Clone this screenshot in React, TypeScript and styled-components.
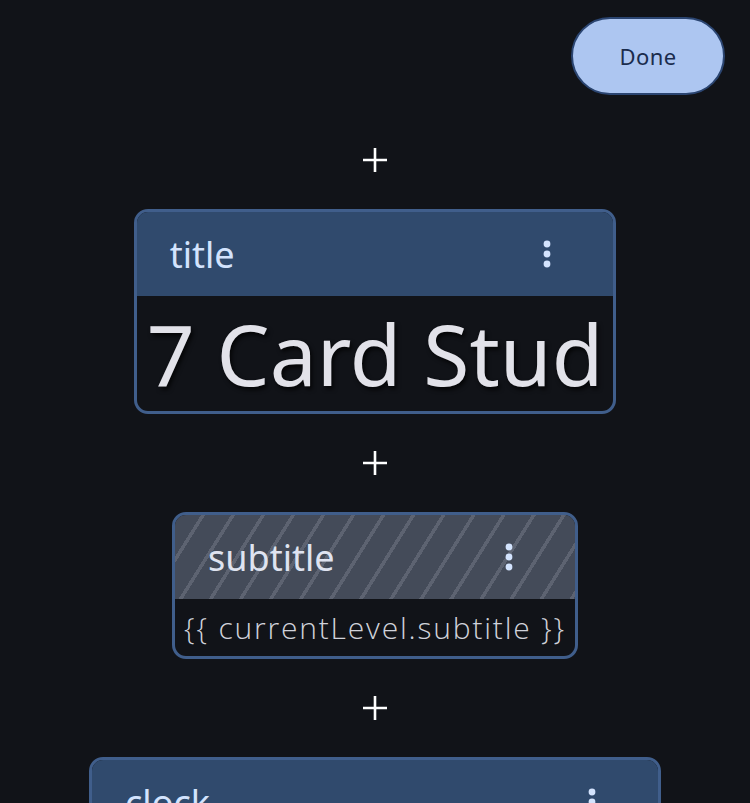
import styled, { createGlobalStyle, css } from 'styled-components';

const GlobalStyle = createGlobalStyle`
  html,
  body {
    margin: 0;
    background: #111318;
    font-family: 'Noto Sans', 'Open Sans', sans-serif;
  }
`;

const StyledPage = styled.main`
  display: flex;
  flex-direction: column;
  align-items: center;
  padding-top: 17px;
`;

const StyledTopBar = styled.div`
  display: flex;
  justify-content: flex-end;
  align-self: stretch;
  padding-right: 25px;
  margin-bottom: 16px;
`;

const StyledDoneButton = styled.button`
  width: 154px;
  height: 78px;
  border: 2px solid #2b4571;
  border-radius: 39px;
  background: #adc6f1;
  color: #1a2c4d;
  font-family: 'Noto Sans', sans-serif;
  font-size: 22px;
  letter-spacing: 0.4px;
  cursor: pointer;
`;

const StyledAddButton = styled.button`
  display: flex;
  align-items: center;
  justify-content: center;
  width: 48px;
  height: 48px;
  margin: 25px 0;
  padding: 0;
  border: 0;
  background: none;
  cursor: pointer;
`;

const StyledCard = styled.section`
  display: flex;
  flex-direction: column;
  overflow: hidden;
  border: 3px solid #405e8b;
  border-radius: 14px;
  background: #111318;
`;

const StyledHeader = styled.header<{ $striped?: boolean }>`
  display: flex;
  align-items: center;
  justify-content: space-between;
  height: 84px;
  padding: 0 54px 0 33px;
  background: #304a6d;
  color: #d3e3fd;

  ${({ $striped }) => $striped && css`
    background: repeating-linear-gradient(
      122deg,
      #444b59 0,
      #444b59 22px,
      #5d6371 22px,
      #5d6371 25.5px
    );
    color: #dfe3f0;
  `}
`;

const StyledName = styled.h2`
  margin: 0;
  font-size: 36px;
  font-weight: 400;
`;

const StyledMenuButton = styled.button`
  display: flex;
  align-items: center;
  justify-content: center;
  width: 24px;
  height: 48px;
  padding: 0;
  border: 0;
  background: none;
  color: inherit;
  cursor: pointer;
`;

const StyledTitleText = styled.div`
  padding: 0 10px;
  color: #e2e2e9;
  font-size: 84px;
  line-height: 115px;
  text-align: center;
  white-space: nowrap;
  text-shadow: 2px 3px 4px rgba(0, 0, 0, 0.75);
`;

const StyledTemplateText = styled.div`
  padding: 0 9px;
  color: #d0d2da;
  font-family: 'Open Sans', 'Noto Sans', sans-serif;
  font-size: 30px;
  font-weight: 300;
  letter-spacing: 1.8px;
  line-height: 57px;
  white-space: nowrap;
`;

const StyledClockText = styled.div`
  padding: 0 12px;
  color: #e2e2e9;
  font-size: 212px;
  line-height: 1.2;
  white-space: nowrap;
`;

const PlusIcon = () => (
  <svg width="26" height="26" viewBox="0 0 26 26">
    <path d="M13 1v24M1 13h24" stroke="#ffffff" strokeWidth="2.6" />
  </svg>
);

const MoreIcon = () => (
  <svg width="8" height="28" viewBox="0 0 8 28" fill="#d3e3fd">
    <circle cx="4" cy="4" r="3.4" />
    <circle cx="4" cy="14" r="3.4" />
    <circle cx="4" cy="24" r="3.4" />
  </svg>
);

const AddButton = () => (
  <StyledAddButton aria-label="Add">
    <PlusIcon />
  </StyledAddButton>
);

const CardHeader = ({ name, striped }: { name: string; striped?: boolean }) => (
  <StyledHeader $striped={striped}>
    <StyledName>{name}</StyledName>
    <StyledMenuButton aria-label="More">
      <MoreIcon />
    </StyledMenuButton>
  </StyledHeader>
);

export default function App() {
  return (
    <StyledPage>
      <GlobalStyle />
      <StyledTopBar>
        <StyledDoneButton>Done</StyledDoneButton>
      </StyledTopBar>

      <AddButton />
      <StyledCard>
        <CardHeader name="title" />
        <StyledTitleText>7 Card Stud</StyledTitleText>
      </StyledCard>

      <AddButton />
      <StyledCard>
        <CardHeader name="subtitle" striped />
        <StyledTemplateText>{'{{ currentLevel.subtitle }}'}</StyledTemplateText>
      </StyledCard>

      <AddButton />
      <StyledCard>
        <CardHeader name="clock" />
        <StyledClockText>15:00</StyledClockText>
      </StyledCard>
    </StyledPage>
  );
}
